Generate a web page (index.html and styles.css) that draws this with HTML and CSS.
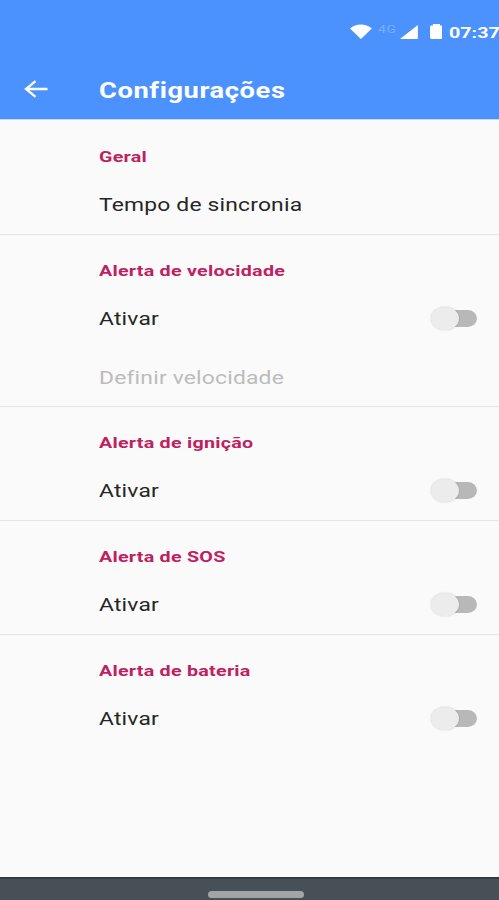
FILE: index.html
```html
<!DOCTYPE html>
<html lang="pt-BR">
<head>
    <meta charset="UTF-8">
    <meta name="viewport" content="width=device-width, initial-scale=1.0">
    <title>Configurações</title>
    <link rel="stylesheet" href="styles.css">
</head>
<body>

<header class="app-header">
    <div class="status-bar">
        <svg class="wifi" width="22" height="15" viewBox="0 0 22 15">
            <path d="M0 4.5C6-1 16-1 22 4.5L11 15z" fill="#fff"/>
        </svg>
        <span class="network"><span class="text">4G</span></span>
        <svg class="signal" width="18" height="14" viewBox="0 0 18 14">
            <path d="M0 14L18 0v14z" fill="#fff"/>
        </svg>
        <svg class="battery" width="13" height="15" viewBox="0 0 13 15">
            <path d="M3 0h7v1.500h1.500q1.500 0 1.500 1.500v10.500q0 1.500-1.500 1.500h-10Q0 15 0 13.500V3Q0 1.500 1.500 1.500H3z" fill="#fff"/>
        </svg>
        <span class="clock"><span class="text">07:37</span></span>
    </div>
    <div class="toolbar">
        <svg class="back" width="24" height="18" viewBox="0 0 24 18">
            <path d="M23.500 9H2M11.500 1.200L2 9l9.500 7.800" fill="none" stroke="#fff" stroke-width="2.300"/>
        </svg>
        <h1><span class="text">Configurações</span></h1>
    </div>
</header>

<main>
    <section>
        <h2><span class="text">Geral</span></h2>
        <div class="item"><span class="text">Tempo de sincronia</span></div>
    </section>
    <section>
        <h2><span class="text">Alerta de velocidade</span></h2>
        <div class="item"><span class="text">Ativar</span><span class="switch"></span></div>
        <div class="item disabled"><span class="text">Definir velocidade</span></div>
    </section>
    <section>
        <h2><span class="text">Alerta de ignição</span></h2>
        <div class="item"><span class="text">Ativar</span><span class="switch"></span></div>
    </section>
    <section>
        <h2><span class="text">Alerta de SOS</span></h2>
        <div class="item"><span class="text">Ativar</span><span class="switch"></span></div>
    </section>
    <section>
        <h2><span class="text">Alerta de bateria</span></h2>
        <div class="item"><span class="text">Ativar</span><span class="switch"></span></div>
    </section>
</main>

<footer class="nav-bar">
    <span class="handle"></span>
</footer>

</body>
</html>
```
FILE: styles.css
```css
* {
    box-sizing: border-box;
}
body {
    display: flex;
    flex-direction: column;
    height: 900px;
    margin: 0;
    overflow: hidden;
    font-family: Roboto, sans-serif;
    background-color: #fafafa;
    color: #262626;
}
/* wide lettering */
.text {
    display: inline-block;
    white-space: nowrap;
    transform: scaleX(1.27);
    transform-origin: left center;
}
.app-header {
    height: 120px;
    background-color: #4b92ff;
    border-bottom: 1px solid #c4dbfa;
    color: #fff;
}
.status-bar {
    display: flex;
    align-items: center;
    height: 62px;
    padding-left: 350px;
}
.network {
    width: 20px;
    margin: -4px 2px 0 6px;
    font-size: 11px;
    letter-spacing: 0.5px;
    color: #78adff;
}
.signal {
    margin-top: 2px;
}
.battery {
    margin: 0 7px 0 12px;
}
.clock {
    width: 50px;
    padding-top: 3px;
    font-size: 15.5px;
    font-weight: 700;
}
.toolbar {
    display: flex;
    align-items: center;
    height: 55px;
}
.back {
    margin: -1px 51px 0 24px;
}
h1 {
    margin: 1px 0 0;
    font-size: 21.5px;
    font-weight: 700;
    letter-spacing: 0.45px;
}
main {
    flex: 1;
    padding-top: 1px;
}
section {
    border-bottom: 1px solid #e4e4e4;
}
section:last-child {
    border-bottom: 0;
}
h2 {
    height: 54px;
    margin: 0;
    padding: 22px 0 0 99px;
    font-size: 15.5px;
    font-weight: 700;
    letter-spacing: 0.2px;
    line-height: 28px;
    color: #bf2160;
}
.item {
    display: flex;
    align-items: center;
    justify-content: space-between;
    height: 59px;
    padding: 0 22px 0 99px;
    font-size: 18px;
    letter-spacing: 0.14px;
}
.disabled {
    height: 58px;
    color: #bcbcbc;
}
.switch {
    position: relative;
    width: 42px;
    height: 17px;
    border-radius: 10px / 9px;
    background-color: #b8b8b8;
}
.switch::before {
    content: "";
    position: absolute;
    left: -4px;
    top: -3px;
    width: 28px;
    height: 23px;
    border-radius: 50%;
    background-color: #ececec;
    box-shadow: 0 0 2px rgba(0, 0, 0, 0.2);
}
.nav-bar {
    display: flex;
    align-items: center;
    justify-content: center;
    height: 23px;
    padding: 9px 0 0 12px;
    border-top: 2px solid #343b3f;
    background-color: #474f57;
}
.handle {
    width: 96px;
    height: 7px;
    border-radius: 4px;
    background-color: #a2a5a8;
}
```
